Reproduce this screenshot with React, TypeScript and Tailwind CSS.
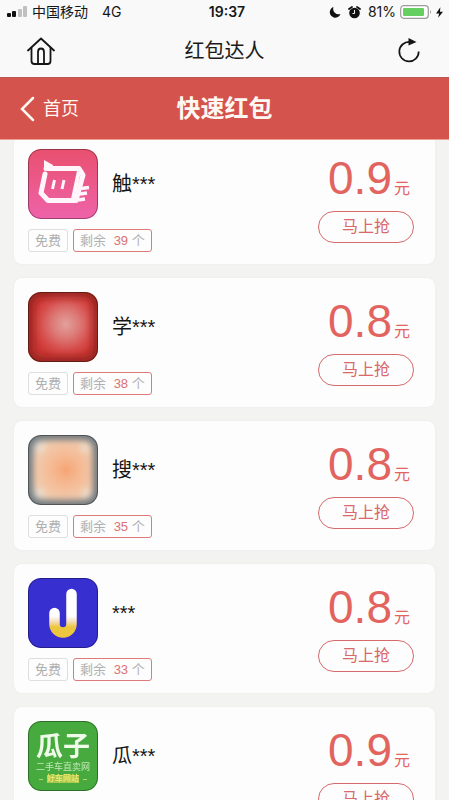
import React from "react";

const FONT = "font-['Liberation_Sans','Noto_Sans_CJK_SC',sans-serif]";

function PinkLogo() {
  return (
    <svg viewBox="0 0 70 70" className="size-full" aria-hidden="true">
      <defs>
        <linearGradient id="pink" x1="0" y1="0" x2="0" y2="1">
          <stop offset="0" stopColor="#e9506f" />
          <stop offset="1" stopColor="#ee63aa" />
        </linearGradient>
        <filter id="pinkSoft" filterUnits="userSpaceOnUse" x="0" y="0" width="70" height="70">
          <feGaussianBlur stdDeviation="0.6" />
        </filter>
      </defs>
      <rect width="70" height="70" fill="url(#pink)" />
      <g filter="url(#pinkSoft)" fill="none" stroke="#fff5fa">
        <path d="M16 11 L25 16 L25 21 L16 21 Z" fill="#fff5fa" stroke="none" />
        <path d="M18 19.500 H51 L55 26 L48 51.500 H20 L13 44 L17 25" strokeWidth="5" strokeLinejoin="round" strokeLinecap="round" />
        <path d="M51 22 L45 50" strokeWidth="4" />
        <path d="M26.500 31 L24.500 40 M36 31 L34 40" strokeWidth="3" />
        <path d="M53 39.500 L61 38.500 M52 45 L59 44 M50 51 L57 50" strokeWidth="3.500" />
      </g>
    </svg>
  );
}

function RedLogo() {
  return (
    <svg viewBox="0 0 70 70" className="size-full" aria-hidden="true">
      <defs>
        <radialGradient id="redGlow" cx="0.54" cy="0.46" r="0.5">
          <stop offset="0" stopColor="#e3a19d" />
          <stop offset="0.4" stopColor="#dc7875" />
          <stop offset="0.75" stopColor="#d64b49" />
          <stop offset="1" stopColor="#cc3835" />
        </radialGradient>
        <filter id="redSoft"><feGaussianBlur stdDeviation="4" /></filter>
      </defs>
      <rect width="70" height="70" fill="url(#redGlow)" />
      <rect width="70" height="70" rx="13" fill="none" stroke="#7d1a17" strokeWidth="7" filter="url(#redSoft)" />
    </svg>
  );
}

function PeachLogo() {
  return (
    <svg viewBox="0 0 70 70" className="size-full" aria-hidden="true">
      <defs>
        <radialGradient id="peachGlow" cx="0.54" cy="0.5" r="0.6">
          <stop offset="0" stopColor="#f6a575" />
          <stop offset="0.35" stopColor="#f5ba94" />
          <stop offset="0.75" stopColor="#f2cbae" />
          <stop offset="1" stopColor="#d8d3cd" />
        </radialGradient>
        <filter id="peachSoft"><feGaussianBlur stdDeviation="3" /></filter>
      </defs>
      <rect width="70" height="70" fill="url(#peachGlow)" />
      <g fill="#e9ebe5" opacity="0.7" filter="url(#peachSoft)">
        <circle cx="13" cy="13" r="4" />
        <circle cx="57" cy="13" r="4" />
        <circle cx="12" cy="58" r="4" />
        <circle cx="58" cy="58" r="4" />
      </g>
      <rect width="70" height="70" rx="13" fill="none" stroke="#70777a" strokeWidth="10" filter="url(#peachSoft)" />
    </svg>
  );
}

function BlueLogo() {
  return (
    <svg viewBox="0 0 70 70" className="size-full" aria-hidden="true">
      <defs>
        <linearGradient id="hook" gradientUnits="userSpaceOnUse" x1="0" y1="38" x2="0" y2="60">
          <stop offset="0" stopColor="#ffffff" />
          <stop offset="0.25" stopColor="#f4dfbd" />
          <stop offset="0.5" stopColor="#edc63f" />
          <stop offset="1" stopColor="#edc63f" />
        </linearGradient>
        <filter id="hookSoft" filterUnits="userSpaceOnUse" x="0" y="0" width="70" height="70">
          <feGaussianBlur stdDeviation="0.7" />
        </filter>
      </defs>
      <rect width="70" height="70" fill="#382fd0" />
      <path d="M43.500 16 V46 A8.500 8.500 0 0 1 26.500 46 V35" fill="none" stroke="url(#hook)" strokeWidth="10.500" strokeLinecap="round" filter="url(#hookSoft)" />
    </svg>
  );
}

function GreenLogo() {
  return (
    <span className="flex size-full flex-col items-center bg-[#46aa3e] pt-2.5 font-bold text-[#effbe9]">
      <span className="text-[27px] leading-8 blur-[0.5px]">瓜子</span>
      <span className="text-[9px] leading-2 font-normal text-[#c4e8b8] blur-[0.5px]">二手车直卖网</span>
      <span className="mt-1 flex items-center gap-1 text-[8px] leading-2 text-[#e6e46a] blur-[0.5px]">
        <i className="h-px w-1 bg-[#b9d860]" />
        <span className="bg-[#a6c850]">好车网站</span>
        <i className="h-px w-1 bg-[#b9d860]" />
      </span>
    </span>
  );
}

const offers = [
  { name: "触***", left: 39, price: "0.9", Logo: PinkLogo },
  { name: "学***", left: 38, price: "0.8", Logo: RedLogo },
  { name: "搜***", left: 35, price: "0.8", Logo: PeachLogo },
  { name: "***", left: 33, price: "0.8", Logo: BlueLogo },
  { name: "瓜***", left: 32, price: "0.9", Logo: GreenLogo },
];

function OfferCard({ name, left, price, Logo }: (typeof offers)[number]) {
  return (
    <li className="flex justify-between rounded-lg bg-[#fdfdfd] pt-3.5 pr-[21px] pb-3 pl-3.5 shadow-[0_0_2px_#e6e6e6]">
      <div>
        <div className="flex items-center gap-3.5">
          <div className="relative size-[70px] overflow-hidden rounded-[13px] after:absolute after:inset-0 after:rounded-[13px] after:border after:border-black/35">
            <Logo />
          </div>
          <h2 className="text-xl text-[#161616]">{name}</h2>
        </div>
        <div className="mt-2.5 flex gap-[5px] text-[13px] leading-[21px] text-[#b0b0b0]">
          <span className="rounded-[3px] border border-[#dedede] px-1.5">免费</span>
          <span className="rounded-[3px] border border-[#df7a7a] px-1.5">
            剩余 <span className="pl-1 text-[#d97272]">{left}</span> 个
          </span>
        </div>
      </div>
      <div className="flex flex-col items-end pt-1">
        <p className="pr-1 text-[46px] leading-[50px] text-[#e2645f]">
          {price}
          <span className="pl-0.5 text-base leading-4">元</span>
        </p>
        <button type="button" className="mt-2 h-8 w-24 rounded-full border border-[#d46a6b] text-base leading-7 text-[#d9696a]">
          马上抢
        </button>
      </div>
    </li>
  );
}

function StatusBar() {
  return (
    <div className="grid h-6 grid-cols-[1fr_auto_1fr] items-center pr-1.5 pl-[7px] text-sm text-[#171717]">
      <div className="flex items-center">
        <svg width="20" height="12" viewBox="0 0 20 12" aria-hidden="true">
          <rect x="0" y="7" width="4" height="4" rx="1" fill="#111" />
          <rect x="5" y="5" width="4" height="6" rx="1" fill="#111" />
          <rect x="11" y="3" width="4" height="8" rx="1" fill="#c0c0c0" />
          <rect x="16" y="0" width="4" height="11" rx="1" fill="#c0c0c0" />
        </svg>
        <span className="pl-[5px]">中国移动</span>
        <span className="pl-3.5 font-['Inter','Liberation_Sans',sans-serif]">4G</span>
      </div>
      <time className="pl-1 font-['Inter','Liberation_Sans',sans-serif] font-semibold">19:37</time>
      <div className="flex items-center justify-end">
        <svg width="12" height="12" viewBox="0 0 12 12" aria-hidden="true">
          <path d="M4.500 1 A5.500 5.500 0 0 0 11.500 8 A5.500 5.500 0 1 1 4.500 1Z" fill="#111" />
        </svg>
        <svg className="ml-[7px]" width="13" height="13" viewBox="0 0 13 13" aria-hidden="true">
          <circle cx="6.500" cy="7" r="5.300" fill="#111" />
          <path d="M1 3 L4 1 M9 1 L12 3" stroke="#111" strokeWidth="1.800" strokeLinecap="round" />
          <path d="M6.500 4 V7.500 H4.500" stroke="#f7f7f7" fill="none" />
        </svg>
        <span className="pl-[7px] font-['Inter','Liberation_Sans',sans-serif]">81%</span>
        <svg className="ml-1" width="32" height="14" viewBox="0 0 32 14" aria-hidden="true">
          <rect x="0.700" y="0.700" width="27.600" height="12.600" rx="3" fill="#fff" stroke="#9c9c9c" strokeWidth="1.200" />
          <rect x="3" y="3" width="21" height="8" rx="1" fill="#65cf61" />
          <path d="M30 5 Q32 7 30 9Z" fill="#9c9c9c" />
        </svg>
        <svg className="ml-1" width="7" height="11" viewBox="0 0 8 12" aria-hidden="true">
          <path d="M5 0 L0 7 H3.500 L2.500 12 L8 5 H4.500Z" fill="#111" />
        </svg>
      </div>
    </div>
  );
}

export default function App() {
  return (
    <div className={`min-h-screen bg-[#f3f3f2] ${FONT}`}>
      <header className="sticky top-0 z-10 bg-[#f8f9f8]">
        <StatusBar />
        <nav className="grid h-[53px] grid-cols-[1fr_auto_1fr] items-center px-[27px]">
          <button type="button" aria-label="主页" className="justify-self-start">
            <svg width="28" height="28" viewBox="0 0 28 28" fill="none" stroke="#151515" strokeWidth="1.800" strokeLinecap="round" strokeLinejoin="round" aria-hidden="true">
              <path d="M1 13.500 L14 1.500 L27 13.500" />
              <path d="M4.500 11 V24 Q4.500 27 7.500 27 H11 V15 Q11 11.500 14 11.500 Q17 11.500 17 15 V27 H20.500 Q23.500 27 23.500 24 V11" />
              <path d="M11 27 H17" />
            </svg>
          </button>
          <h1 className="text-xl text-[#1a1a1a]">红包达人</h1>
          <button type="button" aria-label="刷新" className="justify-self-end pr-0.5">
            <svg width="22" height="26" viewBox="0 0 22 26" aria-hidden="true">
              <path d="M12 4 A9.700 9.700 0 1 0 20.700 13.500" fill="none" stroke="#151515" strokeWidth="1.700" />
              <path d="M10.500 0 L18.500 4 L10.500 7.500Z" fill="#151515" />
            </svg>
          </button>
        </nav>
        <div className="grid h-[63px] grid-cols-[1fr_auto_1fr] items-center border-y border-t-[#b95750] border-b-[#e9a394] bg-[#d5534d] px-5 text-[#fff8f2]">
          <a href="#home" className="flex items-center gap-2 justify-self-start text-lg">
            <svg width="15" height="26" viewBox="0 0 15 26" aria-hidden="true">
              <path d="M13 2 L2 13 L13 24" fill="none" stroke="currentColor" strokeWidth="2.500" strokeLinecap="round" />
            </svg>
            首页
          </a>
          <h2 className="text-2xl font-bold">快速红包</h2>
        </div>
      </header>
      <main className="-mt-[5px] px-3.5">
        <ul className="flex flex-col gap-3.5">
          {offers.map((offer) => (
            <OfferCard key={offer.left} {...offer} />
          ))}
        </ul>
      </main>
    </div>
  );
}
